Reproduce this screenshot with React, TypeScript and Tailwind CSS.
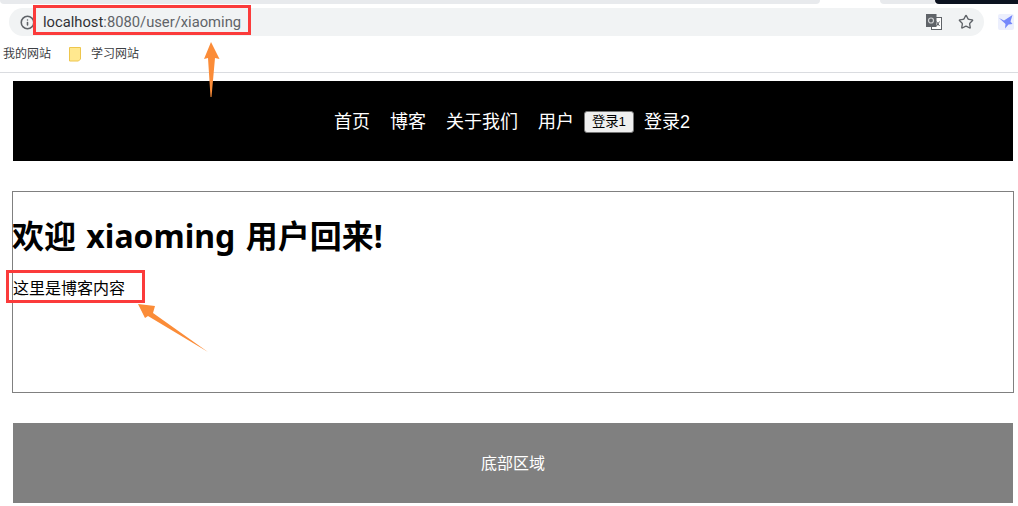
import { Info, Star } from "lucide-react";

const CJK = "font-['Liberation_Sans','Noto_Sans_CJK_SC',sans-serif]";

function TranslateIcon() {
  return (
    <svg width="16" height="16" viewBox="0 0 16 16" className="shrink-0">
      <rect x="5.5" y="3.5" width="10" height="12" fill="#fff" stroke="#5f6368" />
      <rect x="0" y="0" width="10.500" height="13" fill="#5f6368" />
      <circle cx="5" cy="6.500" r="2.500" fill="none" stroke="#cfd1d3" strokeWidth="1.200" />
      <path d="M10.500 7.500l3 4.500M13.500 7.500l-3 4.500" stroke="#5f6368" strokeWidth="1" />
    </svg>
  );
}

function ExtensionIcon() {
  return (
    <svg width="16" height="16" viewBox="0 0 16 16" className="shrink-0">
      <rect width="16" height="16" rx="2" fill="#eceffd" />
      <path d="M1 4l5 2.500L14.500 1l-2 6.500 2 2.500-4 .5-3.500 4 .5-4.500z" fill="#7487fb" />
    </svg>
  );
}

function BrowserBar() {
  return (
    <div className="flex h-[73px] flex-col border-b border-[#dadce0] bg-white">
      <div className="flex h-[8px] bg-white">
        <div className="h-[4px] w-[820px] rounded-b-[8px] bg-[#e8eaed]" />
        <div className="ml-[60px] h-[4px] w-[55px] rounded-bl-[8px] bg-[#e8eaed]" />
        <div className="h-[4px] flex-1 rounded-bl-[6px] bg-[#0b1220]" />
      </div>
      <div className="flex h-[28px] items-center">
        <div className="ml-[9px] flex h-full w-[975px] items-center rounded-full bg-[#f1f3f4] pl-[11px] pr-[10px]">
          <Info size={15} strokeWidth={2.5} className="text-[#5f6368]" />
          <div className="ml-[8px] flex-1 font-['Roboto',sans-serif] text-[14.75px] text-[#5f6368]">
            <span className="text-[#303134]">localhost</span>:8080/user/xiaoming
          </div>
          <TranslateIcon />
          <Star size={16} strokeWidth={2} className="ml-[16px] text-[#5f6368]" />
        </div>
        <div className="ml-[14px]">
          <ExtensionIcon />
        </div>
      </div>
      <div className={`mt-[8px] flex h-[20px] items-center text-[12px] text-[#3c4043] ${CJK}`}>
        <span className="ml-[3px]">我的网站</span>
        <svg width="13" height="15" viewBox="0 0 13 15" className="ml-[18px]">
          <path d="M0.500 0.500h11v11.500l-2 2h-9z" fill="#ffe88f" stroke="#eec64d" />
        </svg>
        <span className="ml-[9px]">学习网站</span>
      </div>
    </div>
  );
}

function NavBar() {
  return (
    <nav className="flex h-[80px] items-center justify-center gap-[20px] bg-black pt-[2px] pr-[2px] text-[18px] text-white">
      <a>首页</a>
      <a>博客</a>
      <a>关于我们</a>
      <div className="flex items-center gap-[10px]">
        <a>用户</a>
        <button className="h-[22px] w-[50px] rounded-[3px] border border-[#767676] bg-[#efefef] text-[13.33px] text-black">
          登录1
        </button>
        <a>登录2</a>
      </div>
    </nav>
  );
}

export default function App() {
  return (
    <div className={`relative h-[506px] w-[1018px] overflow-hidden bg-white ${CJK}`}>
      <BrowserBar />
      <div className="ml-[13px] mr-[5px] mt-[8px]">
        <NavBar />
        <main className="-mx-px mt-[30px] h-[202px] border border-[#808080]">
          <h1 className="mt-[21px] -ml-px font-['Noto_Sans','Noto_Sans_CJK_SC',sans-serif] text-[32px] leading-[46px] font-bold text-black [word-spacing:2px]">
            欢迎 xiaoming 用户回来!
          </h1>
          <p className="mt-[19px] text-[16px] leading-[22px] text-black">这里是博客内容</p>
        </main>
        <footer className="mt-[30px] flex h-[80px] items-center justify-center bg-[#808080] pt-[2px] text-[16px] text-white">
          底部区域
        </footer>
      </div>

      {/* annotations drawn over the screenshot */}
      <div className="absolute left-[33px] top-[5px] h-[30px] w-[218px] border-[3px] border-[#fb3b3b]" />
      <div className="absolute left-[6px] top-[270px] h-[33px] w-[139px] border-[3px] border-[#fb3b3b]" />
      <svg className="absolute left-0 top-0" width="1018" height="506" viewBox="0 0 1018 506">
        <path d="M211 42L219.500 59L215 58L211.500 97L210.500 97L208 58L204 59Z" fill="#fb8c38" />
        <path d="M138 304L155 306L153 313L208 352L148 316L145 318Z" fill="#fb8c38" />
      </svg>
    </div>
  );
}
